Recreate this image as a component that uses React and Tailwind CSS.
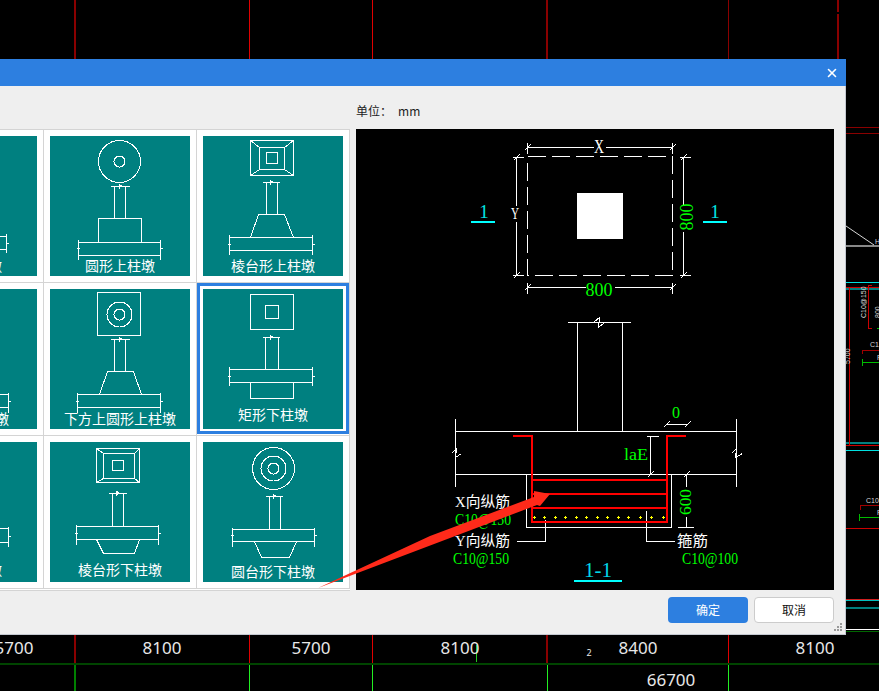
import { X } from "lucide-react";

const CJK = "'Noto Sans CJK SC', sans-serif";
const CAD = "'Liberation Serif', 'Noto Sans CJK SC', serif";

// plan view of a square base, optional corner lines for the sloped ones
const SquarePlan = ({ o, i, c }) => (
  <>
    <rect x={o[0]} y={o[1]} width={o[2] - o[0]} height={o[3] - o[1]} />
    {i && <rect x={i[0]} y={i[1]} width={i[2] - i[0]} height={i[3] - i[1]} />}
    {c && <rect x={c[0]} y={c[1]} width={c[2] - c[0]} height={c[3] - c[1]} />}
    {i && c && (
      <>
        <line x1={o[0]} y1={o[1]} x2={i[0]} y2={i[1]} />
        <line x1={o[2]} y1={o[1]} x2={i[2]} y2={i[1]} />
        <line x1={o[0]} y1={o[3]} x2={i[0]} y2={i[3]} />
        <line x1={o[2]} y1={o[3]} x2={i[2]} y2={i[3]} />
      </>
    )}
  </>
);

const Rings = ({ cx, cy, radii }) => (
  <>
    {radii.map((r) => (
      <circle key={r} cx={cx} cy={cy} r={r} />
    ))}
  </>
);

// column with its break bar, the slab and the two slab ends
const Section = ({ bar, col, slab, ends, mark }) => (
  <>
    <line x1={bar[0]} y1={bar[2]} x2={bar[1]} y2={bar[2]} />
    <path d={`M${(bar[0] + bar[1]) / 2 - 1} ${bar[2] - 2}v4l2 -3z`} />
    <line x1={col[0]} y1={bar[2]} x2={col[0]} y2={col[2]} />
    <line x1={col[1]} y1={bar[2]} x2={col[1]} y2={col[2]} />
    <line x1={slab[0]} y1={slab[2]} x2={slab[1]} y2={slab[2]} />
    <line x1={slab[0]} y1={slab[3]} x2={slab[1]} y2={slab[3]} />
    <line x1={slab[0]} y1={ends[0]} x2={slab[0]} y2={ends[1]} />
    <line x1={slab[1]} y1={ends[0]} x2={slab[1]} y2={ends[1]} />
    <line x1={slab[0] - 2} y1={mark} x2={slab[0] + 1} y2={mark} />
    <line x1={slab[1] - 1} y1={mark} x2={slab[1] + 2} y2={mark} />
  </>
);

const tiles = [
  {
    label: "矩形上柱墩",
    y: 130,
    draw: (
      <>
        <SquarePlan o={[47, 4, 91, 40]} i={[63, 16, 75, 28]} />
        <Section bar={[59, 77, 46]} col={[63, 75, 80]} slab={[26, 109, 100, 113]} ends={[97, 116]} mark={107} />
        <rect x="47" y="80" width="44" height="20" />
      </>
    ),
  },
  {
    label: "圆形上柱墩",
    y: 130,
    draw: (
      <>
        <Rings cx={69} cy={25} radii={[21, 5.5]} />
        <Section bar={[60, 79, 50]} col={[64, 75, 82]} slab={[28, 110, 106, 119]} ends={[103, 123]} mark={112} />
        <rect x="48" y="82" width="43" height="24" />
      </>
    ),
  },
  {
    label: "棱台形上柱墩",
    y: 130,
    draw: (
      <>
        <SquarePlan o={[47, 4, 90, 39]} i={[56, 11, 81, 33]} c={[63, 16, 74, 27]} />
        <Section bar={[59, 76, 46]} col={[63, 74, 78]} slab={[26, 109, 101, 114]} ends={[98, 118]} mark={108} />
        <path d="M55 78H81L90 101M55 78L47 101" />
      </>
    ),
  },
  {
    label: "圆台形上柱墩",
    y: 130,
    draw: (
      <>
        <Rings cx={69} cy={25} radii={[21, 5.5]} />
        <Section bar={[60, 79, 50]} col={[64, 75, 82]} slab={[28, 111, 105, 118]} ends={[103, 123]} mark={112} />
        <path d="M57 82H83L92 105M57 82L49 105" />
      </>
    ),
  },
  {
    label: "下方上圆形上柱墩",
    y: 130,
    draw: (
      <>
        <rect x="47" y="3" width="43" height="43" />
        <Rings cx={69} cy={25} radii={[12.5, 5.5]} />
        <Section bar={[60, 79, 50]} col={[64, 75, 82]} slab={[27, 110, 105, 118]} ends={[103, 123]} mark={112} />
        <path d="M57 82H83L91 105M57 82L49 105" />
      </>
    ),
  },
  {
    label: "矩形下柱墩",
    y: 126,
    draw: (
      <>
        <SquarePlan o={[47, 5, 90, 40]} i={[62, 16, 75, 29]} />
        <Section bar={[59, 76, 48]} col={[62, 75, 80]} slab={[26, 109, 80, 93]} ends={[77, 96]} mark={87} />
        <path d="M47 93V109H90V93" />
      </>
    ),
  },
  {
    label: "圆形下柱墩",
    y: 128,
    draw: (
      <>
        <Rings cx={69} cy={25} radii={[21, 5.5]} />
        <Section bar={[60, 79, 50]} col={[64, 75, 84]} slab={[28, 111, 86, 100]} ends={[84, 104]} mark={94} />
        <path d="M48 100V114H90V100" />
      </>
    ),
  },
  {
    label: "棱台形下柱墩",
    y: 128,
    draw: (
      <>
        <SquarePlan o={[46, 6, 89, 40]} i={[53, 11, 84, 36]} c={[62, 18, 73, 28]} />
        <Section bar={[58, 76, 51]} col={[62, 73, 84]} slab={[26, 108, 84, 97]} ends={[82, 102]} mark={91} />
        <path d="M46 97L53 111H84L89 97" />
      </>
    ),
  },
  {
    label: "圆台形下柱墩",
    y: 130,
    draw: (
      <>
        <Rings cx={70} cy={26} radii={[21, 12.5, 5.5]} />
        <Section bar={[62, 79, 54]} col={[66, 77, 87]} slab={[29, 111, 87, 99]} ends={[85, 104]} mark={93} />
        <path d="M51 99L58 115H86L93 99" />
      </>
    ),
  },
];

const Tile = ({ label, y, draw }) => (
  <svg viewBox="0 0 140 140" className="block h-[140px] w-[140px] bg-[#008080]">
    <g fill="none" stroke="#ffffff" strokeWidth="1" shapeRendering="crispEdges" transform="translate(0.5 0.5)">
      {draw}
    </g>
    <text x="70" y={y + 5} textAnchor="middle" fontSize="14" fill="#ffffff" style={{ fontFamily: CJK }}>
      {label}
    </text>
  </svg>
);

const tick = (x, y) => `M${x - 3} ${y + 3}L${x + 3} ${y - 3}`;
const rebarDots = [313, 343, 376, 406, 439, 469, 502, 532, 565, 595, 631, 664, 700];

const CadText = ({ x, y, fill = "#00ff00", size = 15, len, anchor = "middle", children, ...rest }) => (
  <text
    x={x}
    y={y}
    fill={fill}
    fontSize={size}
    textAnchor={anchor}
    textLength={len}
    lengthAdjust={len ? "spacingAndGlyphs" : undefined}
    style={{ fontFamily: CAD }}
    {...rest}
  >
    {children}
  </text>
);

// the drawing in the right panel, in page coordinates
const DetailDrawing = () => (
  <svg viewBox="356 129 478 461" className="block h-[461px] w-[478px] bg-black">
    <g fill="none" stroke="#ffffff" shapeRendering="crispEdges" transform="translate(0.5 0.5)">
      <path d="M527 147H593M605 147H672M527 142V153M672 142V153" />
      <path d={`${tick(527, 147)}${tick(672, 147)}${tick(527, 287)}${tick(672, 287)}`} />
      <path d="M527 156H672V275H527Z" strokeDasharray="18 6" />
      <path d="M512 157H523M512 275H523M516 157V205M516 221V275" />
      <path d={`${tick(516, 157)}${tick(516, 275)}${tick(683, 157)}${tick(683, 275)}`} />
      <path d="M679 157H690M679 275H690M683 157V204M683 231V275" />
      <path d="M527 287H585M614 287H672M527 282V293M672 282V293" />
      <path d="M567 322H630M577 322V431M622 322V431M593 322L599 317L598 327L604 322" />
      <path d="M455 431H736M455 474H736M455 418V486M736 418V486" />
      <path d="M451 453L456 448L455 457L461 453M731 453L736 448L735 457L742 453" />
      <path d="M526 474V527H671V474" />
      <path d="M666 424H687" />
      <path d={`${tick(666, 424)}${tick(687, 424)}`} />
      <path d="M650 436V474M646 436H658M646 474H658" />
      <path d="M686 474V486M686 516V527M677 527H693" />
      <path d={`${tick(650, 474)}${tick(686, 474)}`} />
      <path d="M516 541H545V519M646 510V541H674" />
    </g>
    <rect x="577" y="193" width="46" height="46" fill="#ffffff" />
    <g fill="none" stroke="#ff0000" strokeWidth="2" shapeRendering="crispEdges">
      <path d="M513 436H532V522H667V436H686" />
      <path d="M532 480H667M532 494H667M532 508H667" />
    </g>
    <g stroke="#ffff00" shapeRendering="crispEdges">
      {rebarDots.map((z) => (
        <path key={z} d={`M${430 + z / 3 - 1.5} 517.5h3M${430 + z / 3} 516v3`} />
      ))}
    </g>
    <rect x="471" y="221" width="24" height="2" fill="#00ffff" />
    <rect x="703" y="221" width="24" height="2" fill="#00ffff" />
    <rect x="574" y="580" width="48" height="2" fill="#00ffff" />
    <CadText x={484} y={218} fill="#00e5e5" size={19}>1</CadText>
    <CadText x={715} y={218} fill="#00e5e5" size={19}>1</CadText>
    <CadText x={599} y={153} fill="#ffffff" size={18} len={10}>X</CadText>
    <CadText x={515} y={219} fill="#ffffff" size={16} len={8}>Y</CadText>
    <CadText x={599} y={296} size={19} len={27}>800</CadText>
    <CadText x={0} y={0} size={19} len={27} transform="translate(693 217) rotate(-90)">800</CadText>
    <CadText x={676} y={418} size={16}>0</CadText>
    <CadText x={636} y={460} size={16} len={24}>laE</CadText>
    <CadText x={0} y={0} size={17} len={26} transform="translate(691 502) rotate(-90)">600</CadText>
    <CadText x={455} y={507} fill="#ffffff" anchor="start" len={55}>X向纵筋</CadText>
    <CadText x={455} y={525} anchor="start" size={16} len={56}>C10@150</CadText>
    <CadText x={455} y={546} fill="#ffffff" anchor="start" len={55}>Y向纵筋</CadText>
    <CadText x={453} y={564} anchor="start" size={16} len={56}>C10@150</CadText>
    <CadText x={677} y={546} fill="#ffffff" anchor="start" len={31}>箍筋</CadText>
    <CadText x={682} y={564} anchor="start" size={16} len={56}>C10@100</CadText>
    <CadText x={598} y={577} fill="#00d8e8" size={22} len={28}>1-1</CadText>
  </svg>
);

const numbers = [
  ["5700", 14, 654],
  ["8100", 162, 654],
  ["5700", 311, 654],
  ["8100", 460, 654],
  ["8400", 638, 654],
  ["8100", 815, 654],
  ["66700", 671, 686],
];

// CAD sheet behind the dialog
const CadBackground = () => (
  <svg viewBox="0 0 879 691" className="absolute inset-0 h-[691px] w-[879px]">
    <g shapeRendering="crispEdges" fill="none">
      <path d="M75 0V59M75 634V664M547 0V59M547 634V664M838 0V12M838 14V59" stroke="#8a0000" strokeWidth="2" />
      <path d="M249.5 0V59M249.5 634V664M372.5 0V59M372.5 634V664M728.5 634V664" stroke="#e00000" />
      <path d="M728.5 0V59" stroke="#8a0000" />
      <path d="M0 664H879" stroke="#004400" strokeWidth="2" />
      <path d="M75 665V691" stroke="#008000" strokeWidth="2" />
      <path d="M249.5 665V691M372.5 665V691M547.5 665V691M728.5 665V691" stroke="#22ee22" />
      <path d="M476.5 645V662" stroke="#22cc22" />
      <path d="M846 127.5H879M846 133.5H879" stroke="#8a0000" />
      <path d="M846 246H879" stroke="#888888" strokeWidth="2" />
      <path d="M846 282.5H879M846 450.5H879" stroke="#00e0e0" />
      <path d="M846 289H879M846 443H879" stroke="#008080" strokeWidth="2" />
      <path d="M846 287.5H879M846 445.5H879M849.5 287V446M868.5 285V328H872M868.5 285H872" stroke="#cc0000" />
      <path d="M862.5 354V350.5H879M860.5 510V505.5H879" stroke="#a00000" strokeWidth="1" />
      <path d="M846 528.5H879" stroke="#cc0000" />
      <path d="M862 362.5H879M859 517.5H879M862.5 359V366M859.5 514V521M877 328.5H879" stroke="#00bb00" />
      <path d="M846 599.5H879" stroke="#d02020" />
      <path d="M846 600.5H879" stroke="#00c0c0" />
      <path d="M846 608H879" stroke="#008080" strokeWidth="2" />
      <path d="M846 629.5H879" stroke="#ffffff" />
      <path d="M846 631.5H879" stroke="#006600" />
    </g>
    <path d="M846 226L874 245" stroke="#d8d8d8" fill="none" />
    <g fill="#d8d8d8" fontSize="7" style={{ fontFamily: "'Liberation Sans', sans-serif" }}>
      <text x="875" y="244">H</text>
      <text x="870" y="347">C12</text>
      <text x="866" y="503">C10@</text>
      <text x="877" y="360">R</text>
      <text x="877" y="515">R</text>
      <text transform="translate(866 318) rotate(-90)">C10@150</text>
      <text transform="translate(880 318) rotate(-90)">800</text>
      <text transform="translate(850 364) rotate(-90)">5700</text>
    </g>
    <g fill="#e8e8e8" fontSize="17" textAnchor="middle" style={{ fontFamily: "'Noto Sans', sans-serif" }}>
      {numbers.map(([n, x, y]) => (
        <text key={`${n}-${x}`} x={x} y={y}>
          {n}
        </text>
      ))}
    </g>
    <text x="589" y="656" fill="#e8e8e8" fontSize="9" textAnchor="middle" style={{ fontFamily: "'Noto Sans', sans-serif" }}>
      2
    </text>
  </svg>
);

export default function App() {
  return (
    <div className="relative h-[691px] w-[879px] overflow-hidden bg-black">
      <CadBackground />

      <div className="absolute left-0 top-[59px] w-[846px]" style={{ fontFamily: CJK }}>
        <div className="flex h-[27px] items-center justify-end bg-[#2d7fe0] pr-[7px] text-white">
          <X size={14} strokeWidth={2.8} />
        </div>

        <div className="relative border-b border-r border-[#c4c8d0] bg-[#efefef]">
          <div className="flex h-[43px] items-center pl-[356px] pt-[7px] text-xs text-[#222222]">
            <span>单位：</span>
            <span className="ml-[6px]">mm</span>
          </div>

          <div className="flex items-start">
            <div className="w-[350px] overflow-hidden border-y border-[#d4d4d4] bg-white pb-px">
              <div className="-ml-[109px] grid grid-cols-[repeat(3,153px)]">
                {tiles.map((t, i) => (
                  <div key={t.label} className="relative h-[153px] border-b border-r border-[#d4d4d4] pl-[6px] pt-[6px]">
                    <Tile {...t} />
                    {i === 5 && (
                      <span className="absolute left-0 top-0 h-[151px] w-[152px] border-[3px] border-[#2d7fe0]" />
                    )}
                  </div>
                ))}
              </div>
            </div>
            <div className="ml-[6px]">
              <DetailDrawing />
            </div>
          </div>

          <div className="flex h-[43px] justify-end gap-[6px] pr-[11px] pt-[6px] text-xs">
            <button className="h-[26px] w-[80px] rounded bg-[#2d7fe0] text-white">确定</button>
            <button className="h-[26px] w-[80px] rounded border border-[#cccccc] bg-white text-[#111111]">取消</button>
          </div>

          <svg viewBox="0 0 8 8" className="absolute bottom-[3px] right-[3px] h-2 w-2" fill="#9a9a9a">
            <path d="M6 0h2v2H6zM3 3h2v2H3zM6 3h2v2H6zM0 6h2v2H0zM3 6h2v2H3zM6 6h2v2H6z" />
          </svg>
        </div>
      </div>

      {/* red arrow pasted over the screenshot */}
      <svg viewBox="0 0 879 691" className="pointer-events-none absolute inset-0 h-[691px] w-[879px]">
        <polygon points="318,588 430,536 534,497 534,491 550,494 540,506 537,505" fill="#ff2a1a" />
      </svg>
    </div>
  );
}
